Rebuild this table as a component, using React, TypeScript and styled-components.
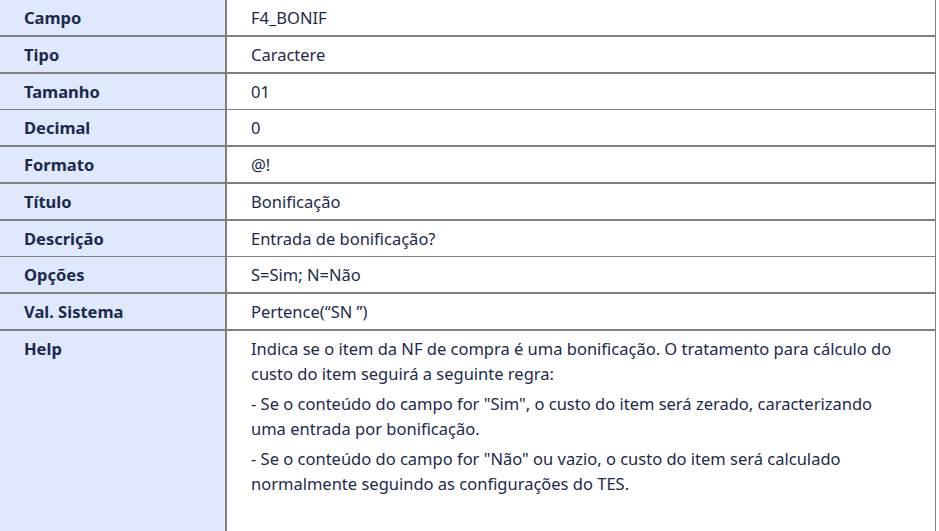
import React from "react";
import styled, { createGlobalStyle } from "styled-components";

const Global = createGlobalStyle`
  html, body { margin: 0; padding: 0; background: #ffffff; }
  body { font-family: "Noto Sans", "Open Sans", sans-serif; }
`;

const Table = styled.div`
  display: grid;
  grid-template-columns: 225px 1fr;
  column-gap: 2px;
  row-gap: 1.75px;
  width: 935px;
  padding: 0 1px 1px 0;
  background: #808080;
  color: #1c2a4c;
  font-size: 16.5px;
`;

const Label = styled.div<{ $tall?: boolean }>`
  background: #dfe8fc;
  font-weight: 700;
  padding: 0 24px;
  line-height: 36px;
  height: ${(p) => (p.$tall ? "200px" : "35px")};
  box-sizing: border-box;
  ${(p) => (p.$tall ? "padding-top: 5px; line-height: 25px;" : "")}
`;

const Value = styled.div`
  background: #ffffff;
  padding: 0 24px;
  line-height: 36px;
  height: 35px;
  box-sizing: border-box;
`;

const HelpCell = styled.div`
  background: #ffffff;
  padding: 5px 24px 0 24px;
  height: 200px;
  box-sizing: border-box;
  line-height: 25px;
`;

const Para = styled.p`
  margin: 0 0 5px 0;
`;

const rows: [string, string][] = [
  ["Campo", "F4_BONIF"],
  ["Tipo", "Caractere"],
  ["Tamanho", "01"],
  ["Decimal", "0"],
  ["Formato", "@!"],
  ["Título", "Bonificação"],
  ["Descrição", "Entrada de bonificação?"],
  ["Opções", "S=Sim; N=Não"],
  ["Val. Sistema", "Pertence(“SN ”)"],
];

export default function App() {
  return (
    <>
      <Global />
      <Table>
        {rows.map(([k, v]) => (
          <React.Fragment key={k}>
            <Label>{k}</Label>
            <Value>{v}</Value>
          </React.Fragment>
        ))}
        <Label $tall>Help</Label>
        <HelpCell>
          <Para>
            Indica se o item da NF de compra é uma bonificação. O tratamento para cálculo do
            custo do item seguirá a seguinte regra:
          </Para>
          <Para>
            - Se o conteúdo do campo for "Sim", o custo do item será zerado, caracterizando
            uma entrada por bonificação.
          </Para>
          <Para>
            - Se o conteúdo do campo for "Não" ou vazio, o custo do item será calculado
            normalmente seguindo as configurações do TES.
          </Para>
        </HelpCell>
      </Table>
    </>
  );
}
